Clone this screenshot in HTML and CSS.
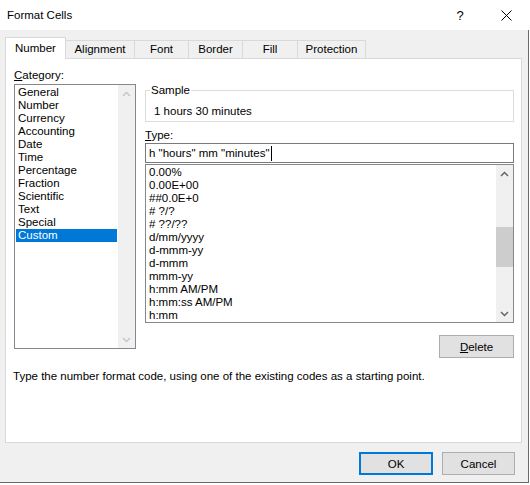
FILE: index.html
```html
<!DOCTYPE html>
<html lang="en">
<head>
<meta charset="utf-8">
<title>Format Cells</title>
<link rel="stylesheet" href="styles.css">
</head>
<body>
<div class="window">
  <div class="titlebar">
    <span class="title">Format Cells</span>
    <span class="cap-btn help">?</span>
    <span class="cap-btn close">
      <svg width="11" height="11" viewBox="0 0 11 11"><path d="M0.5 0.5L10.5 10.5M10.5 0.5L0.5 10.5" stroke="#000" stroke-width="1" fill="none"/></svg>
    </span>
  </div>
  <div class="body">
    <div class="tabs">
      <div class="tab sel w-number">Number</div>
      <div class="tab w-align">Alignment</div>
      <div class="tab w-font">Font</div>
      <div class="tab w-border">Border</div>
      <div class="tab w-fill">Fill</div>
      <div class="tab w-prot">Protection</div>
    </div>
    <div class="panel">
      <div class="main">
        <div class="left">
          <div class="label"><u>C</u>ategory:</div>
          <div class="listbox cat">
            <div class="items">
              <div class="item">General</div>
              <div class="item">Number</div>
              <div class="item">Currency</div>
              <div class="item">Accounting</div>
              <div class="item">Date</div>
              <div class="item">Time</div>
              <div class="item">Percentage</div>
              <div class="item">Fraction</div>
              <div class="item">Scientific</div>
              <div class="item">Text</div>
              <div class="item">Special</div>
              <div class="item sel">Custom</div>
            </div>
            <div class="vscroll disabled">
              <div class="sbtn"><svg width="9" height="6" viewBox="0 0 9 6"><path d="M1 5L4.5 1.5L8 5" fill="none" stroke="#c4c4c4" stroke-width="1.4"/></svg></div>
              <div class="track"></div>
              <div class="sbtn"><svg width="9" height="6" viewBox="0 0 9 6"><path d="M1 1L4.5 4.5L8 1" fill="none" stroke="#c4c4c4" stroke-width="1.4"/></svg></div>
            </div>
          </div>
        </div>
        <div class="right">
          <fieldset class="sample">
            <legend>Sample</legend>
            <div class="sample-val">1 hours 30 minutes</div>
          </fieldset>
          <div class="label type-label"><u>T</u>ype:</div>
          <div class="textbox"><span>h "hours" mm "minutes"</span><span class="caret"></span></div>
          <div class="listbox types">
            <div class="items">
              <div class="item">0.00%</div>
              <div class="item">0.00E+00</div>
              <div class="item">##0.0E+0</div>
              <div class="item"># ?/?</div>
              <div class="item"># ??/??</div>
              <div class="item">d/mm/yyyy</div>
              <div class="item">d-mmm-yy</div>
              <div class="item">d-mmm</div>
              <div class="item">mmm-yy</div>
              <div class="item">h:mm AM/PM</div>
              <div class="item">h:mm:ss AM/PM</div>
              <div class="item">h:mm</div>
            </div>
            <div class="vscroll">
              <div class="sbtn"><svg width="9" height="6" viewBox="0 0 9 6"><path d="M1 5L4.5 1.5L8 5" fill="none" stroke="#606060" stroke-width="1.4"/></svg></div>
              <div class="track"><div class="thumb"></div></div>
              <div class="sbtn"><svg width="9" height="6" viewBox="0 0 9 6"><path d="M1 1L4.5 4.5L8 1" fill="none" stroke="#606060" stroke-width="1.4"/></svg></div>
            </div>
          </div>
          <button class="btn delete"><u>D</u>elete</button>
        </div>
      </div>
      <p class="desc">Type the number format code, using one of the existing codes as a starting point.</p>
    </div>
    <div class="footer">
      <button class="btn ok">OK</button>
      <button class="btn cancel">Cancel</button>
    </div>
  </div>
</div>
</body>
</html>
```

FILE: styles.css
```css
* { box-sizing: border-box; }
html, body { margin: 0; padding: 0; }
body {
  width: 530px;
  height: 485px;
  overflow: hidden;
  background: #ffffff;
  font-family: "Liberation Sans", Arial, sans-serif;
  font-size: 11.5px;
  color: #000;
}
.window {
  width: 529px;
  height: 483px;
  display: flex;
  flex-direction: column;
}
.titlebar {
  height: 30px;
  flex: none;
  background: #fff;
  display: flex;
  align-items: center;
  padding-left: 7px;
}
.title { flex: 1; }
.cap-btn {
  width: 46px;
  height: 30px;
  display: flex;
  align-items: center;
  justify-content: center;
}
.help { font-size: 13px; }
.body {
  flex: 1;
  background: #f0f0f0;
  padding: 7px 0 0 5px;
  border-right: 1px solid #6b6b6b;
  border-bottom: 1px solid #6b6b6b;
}
.tabs {
  display: flex;
  align-items: flex-end;
  height: 21px;
}
.tab {
  height: 18px;
  border-top: 1px solid #d9d9d9;
  border-right: 1px solid #d9d9d9;
  text-align: center;
  line-height: 17px;
  white-space: nowrap;
}
.tab.sel {
  height: 22px;
  background: #fff;
  border-left: 1px solid #d9d9d9;
  margin-bottom: -1px;
  padding-top: 2px;
  position: relative;
  z-index: 1;
}
.w-number { width: 61px; }
.w-align { width: 69px; }
.w-font { width: 54px; }
.w-border { width: 54px; }
.w-fill { width: 55px; }
.w-prot { width: 68px; }
.panel {
  width: 517px;
  height: 385px;
  background: #fff;
  border: 1px solid #d9d9d9;
  display: flex;
  flex-direction: column;
}
.main {
  display: flex;
  gap: 9px;
  padding: 8px 7px 0 8px;
}
.left { width: 122px; flex: none; }
.label { line-height: 16px; height: 16px; }
.listbox {
  border: 1px solid #828790;
  background: #fff;
  display: flex;
}
.cat { height: 265px; margin-top: 1px; }
.items {
  flex: 1;
  padding: 1px 1px 0 1px;
  overflow: hidden;
}
.item {
  height: 13px;
  line-height: 13px;
  padding-left: 2px;
  white-space: nowrap;
}
.item.sel { background: #0078d7; color: #fff; }
.vscroll {
  width: 17px;
  flex: none;
  background: #f0f0f0;
  display: flex;
  flex-direction: column;
}
.sbtn {
  height: 17px;
  flex: none;
  display: flex;
  align-items: center;
  justify-content: center;
}
.sbtn svg { display: block; }
.track { flex: 1; }
.thumb {
  height: 40px;
  margin-top: 45px;
  background: #cdcdcd;
}
.right {
  width: 369px;
  flex: none;
  display: flex;
  flex-direction: column;
  margin-top: 15px;
}
.sample {
  margin: 0;
  min-width: 0;
  border: 1px solid #dcdcdc;
  padding: 5px 8px 2px 8px;
}
.sample legend {
  padding: 0 1px;
  margin-left: -4px;
  line-height: 16px;
}
.sample-val { line-height: 16px; }
.type-label { margin-top: 5px; }
.textbox {
  height: 20px;
  border: 1px solid #7a7a7a;
  background: #fff;
  padding-left: 3px;
  display: flex;
  align-items: center;
  white-space: pre;
}
.caret {
  width: 1px;
  height: 15px;
  background: #000;
  margin-left: 1px;
}
.types { height: 159px; margin-top: 1px; }
.btn {
  font: inherit;
  letter-spacing: inherit;
  color: #000;
  background: #e1e1e1;
  border: 1px solid #adadad;
  padding: 0;
  height: 23px;
  border-radius: 0;
}
.delete {
  width: 75px;
  align-self: flex-end;
  margin-top: 12px;
}
.desc {
  margin: 10px 0 0;
  padding-left: 7px;
  line-height: 16px;
}
.footer {
  display: flex;
  justify-content: flex-end;
  gap: 9px;
  padding-right: 13px;
  margin-top: 9px;
}
.ok { width: 74px; border: 2px solid #0078d7; }
.cancel { width: 73px; }
```
